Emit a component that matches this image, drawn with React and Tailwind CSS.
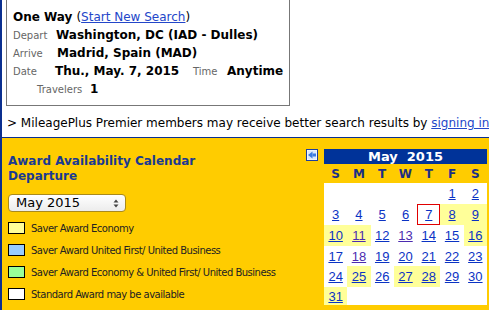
import React from 'react';

const legend = [
    { color: 'bg-[#ffff99]', label: 'Saver Award Economy' },
    { color: 'bg-[#99ccff]', label: 'Saver Award United First/ United Business' },
    { color: 'bg-[#99ff99]', label: 'Saver Award Economy & United First/ United Business' },
    { color: 'bg-white', label: 'Standard Award may be available' },
];

// saver days get the pale yellow cell
const saver = [8, 9, 10, 11, 16, 25, 27, 28, 31];
const visited = [11, 13, 18];
const rowHeights = ['h-[21px]', 'h-[21px]', 'h-[21px]', 'h-[20px]', 'h-[21px]', 'h-[18px]'];

const buildWeeks = () => {
    const cells = [null, null, null, null, null];
    for (let d = 1; d <= 31; d++) cells.push(d);
    while (cells.length % 7) cells.push(null);
    const weeks = [];
    for (let i = 0; i < cells.length; i += 7) weeks.push(cells.slice(i, i + 7));
    return weeks;
};

const PrevArrow = () => (
    <svg width="12" height="12" viewBox="0 0 12 12" className="block">
        <rect x="0.5" y="0.5" width="11" height="11" fill="#ffffff" stroke="#1d3f9e" />
        <rect x="1.5" y="1.5" width="9" height="9" fill="#dde9fb" />
        <path d="M2 6 L6.5 2.5 L6.5 9.5 Z" fill="#3b7be0" />
        <rect x="6.5" y="4.5" width="3.5" height="3" fill="#3b7be0" />
    </svg>
);

const Calendar = () => {
    const weeks = buildWeeks();
    return (
        <div className="w-[163px]">
            <div className="h-[15px] bg-[#003399] text-white font-bold text-[13px] leading-[15px] text-center">
                May&nbsp;&nbsp;2015
            </div>
            <div className="grid grid-cols-7 h-[19px] items-center text-[#1b2f86] font-bold text-[12px] text-center">
                {['S', 'M', 'T', 'W', 'T', 'F', 'S'].map((d, i) => (
                    <span key={i}>{d}</span>
                ))}
            </div>
            <div className="bg-white">
                {weeks.map((week, wi) => (
                    <div key={wi} className={`grid grid-cols-7 ${rowHeights[wi]}`}>
                        {week.map((day, di) => {
                            if (!day) return <div key={di} />;
                            const bg = saver.includes(day) ? 'bg-[#ffff99]' : '';
                            const ring = day === 7 ? 'border border-[#e00000]' : '';
                            const color = visited.includes(day) ? 'text-[#4b2bb0]' : 'text-[#0b33c4]';
                            return (
                                <div key={di} className={`flex items-center justify-center ${bg} ${ring}`}>
                                    <a href="#" className={`${color} underline text-[13px] leading-none font-['Liberation_Sans',Arial,sans-serif]`}>
                                        {day}
                                    </a>
                                </div>
                            );
                        })}
                    </div>
                ))}
            </div>
        </div>
    );
};

const App = () => {
    return (
        <div className="w-[489px] h-[310px] overflow-hidden bg-white font-['DejaVu_Sans',Verdana,sans-serif] text-black">
            <div className="flex flex-col h-full border-l-2 border-[#0b2f8f]">
                <div className="h-[138px] shrink-0 border-b border-[#0b2f8f]">
                    <div className="ml-[4px] w-[284px] h-[106px] border-x border-b border-[#777777] pt-[8px] pl-[6px]">
                        <div className="h-[18px] flex items-center text-[12px]">
                            <span className="font-bold">One Way</span>
                            <span className="ml-[4px]">
                                (<a href="#" className="text-[#2346c9] underline">Start New Search</a>)
                            </span>
                        </div>
                        <div className="h-[18px] flex items-center">
                            <span className="w-[43px] text-[10px] text-[#666666]">Depart</span>
                            <span className="text-[12px] font-bold">Washington, DC (IAD - Dulles)</span>
                        </div>
                        <div className="h-[18px] flex items-center">
                            <span className="w-[44px] text-[10px] text-[#666666]">Arrive</span>
                            <span className="text-[12px] font-bold">Madrid, Spain (MAD)</span>
                        </div>
                        <div className="h-[18px] flex items-center">
                            <span className="w-[42px] text-[10px] text-[#666666]">Date</span>
                            <span className="w-[138px] text-[12px] font-bold">Thu., May. 7, 2015</span>
                            <span className="w-[34px] text-[10px] text-[#666666]">Time</span>
                            <span className="text-[12px] font-bold">Anytime</span>
                        </div>
                        <div className="h-[18px] flex items-center pl-[24px]">
                            <span className="w-[53px] text-[10px] text-[#666666]">Travelers</span>
                            <span className="text-[12px] font-bold">1</span>
                        </div>
                    </div>
                    <div className="mt-[8px] pl-[5px] h-[18px] flex items-center whitespace-nowrap text-[12px]">
                        &gt; MileagePlus Premier members may receive better search results by&nbsp;
                        <a href="#" className="text-[#2346c9] underline">signing in</a>
                    </div>
                </div>
                <div className="flex-1 bg-[#ffcc00] flex">
                    <div className="pl-[6px] pt-[16px]">
                        <div className="text-[#1a3a92] font-bold text-[12px] leading-[15px]">
                            Award Availability Calendar
                            <br />
                            Departure
                        </div>
                        <div className="mt-[10px] w-[118px] h-[18px] rounded-[4px] border border-[#a98a1c] bg-gradient-to-b from-white to-[#ececec] flex items-center justify-between pl-[7px] pr-[6px] text-[13px]">
                            <span>May 2015</span>
                            <svg width="6" height="9" viewBox="0 0 6 9">
                                <path d="M0.5 3.5 L3 0.5 L5.5 3.5 Z" fill="#444" />
                                <path d="M0.5 5.5 L3 8.5 L5.5 5.5 Z" fill="#444" />
                            </svg>
                        </div>
                        <div className="mt-[10px] flex flex-col gap-[10px]">
                            {legend.map((item) => (
                                <div key={item.label} className="h-[12px] flex items-center">
                                    <span className={`w-[17px] h-[12px] border border-black ${item.color}`} />
                                    <span className="ml-[6px] text-[10px] tracking-[-0.5px] text-[#222222] whitespace-nowrap">{item.label}</span>
                                </div>
                            ))}
                        </div>
                    </div>
                    <div className="ml-auto pr-[2px] pt-[11px] flex items-start">
                        <div className="mr-[6px]">
                            <PrevArrow />
                        </div>
                        <Calendar />
                    </div>
                </div>
            </div>
        </div>
    );
};

export default App;
